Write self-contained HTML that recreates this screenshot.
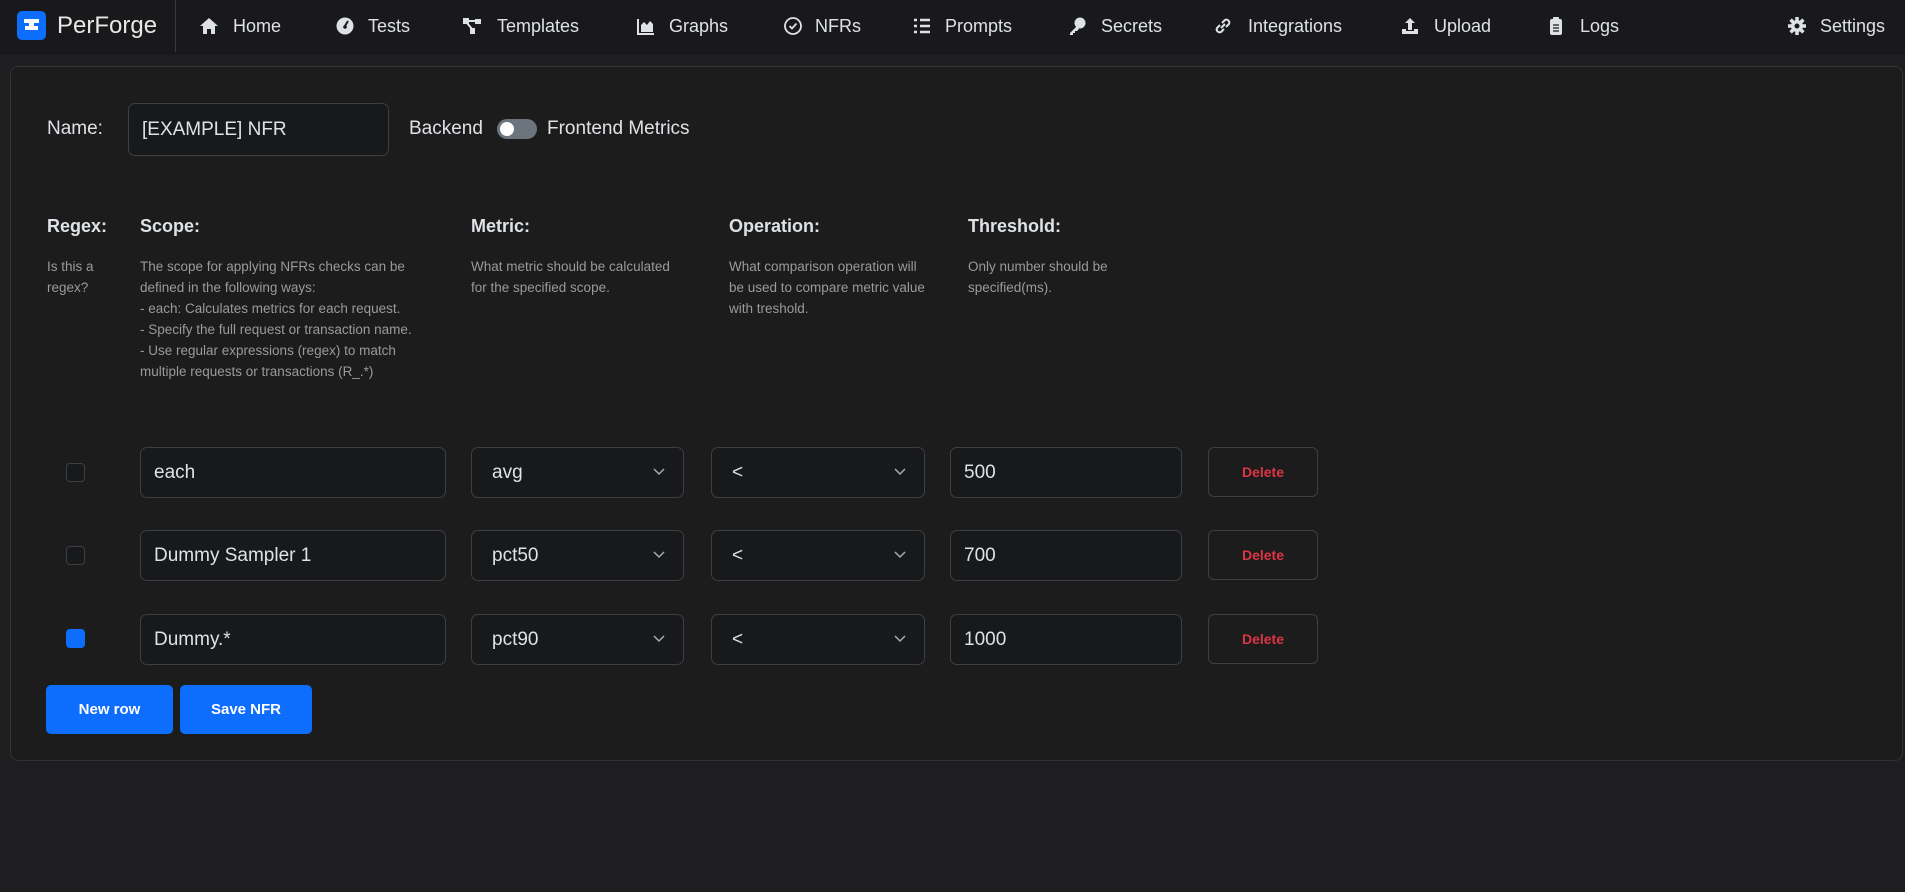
<!DOCTYPE html>
<html><head><meta charset="utf-8"><style>
*{box-sizing:border-box;margin:0;padding:0}
body{width:1905px;height:892px;background:#1e1e20;font-family:"Liberation Sans",sans-serif;color:#dee2e6;position:relative;overflow:hidden}
.a{position:absolute;white-space:nowrap}
.nav{position:absolute;left:0;top:0;width:1905px;height:55px;background:#19191b}
.ni{position:absolute;top:15px;font-size:18px;color:#dee2e6;line-height:22px}
.ic{position:absolute;top:16px;width:20px;height:20px}
.card{position:absolute;left:10px;top:66px;width:1893px;height:695px;background:#1c1c1c;border:1px solid #333;border-radius:8px}
.h{position:absolute;top:216px;font-size:18px;font-weight:bold;color:#dee2e6}
.d{position:absolute;top:256px;font-size:13.5px;line-height:21px;color:#9a9a9a}
.in{position:absolute;height:51px;background:#18191b;border:1px solid #3c3f44;border-radius:7px;font-size:19px;line-height:49px;padding-left:13px;color:#dee2e6}
.sel{padding-left:20px}
.sel svg{position:absolute;right:18px;top:20px}
.cb{position:absolute;left:66px;width:19px;height:19px;border:1px solid #3c3f44;border-radius:4px;background:#18191b}
.del{position:absolute;left:1208px;width:110px;height:50px;border:1px solid #3c3f44;border-radius:6px;color:#dc3545;font-weight:bold;font-size:14px;text-align:center;line-height:48px}
.btn{position:absolute;top:685px;height:49px;background:#0d6efd;border-radius:5px;color:#fff;font-weight:bold;font-size:15px;text-align:center;line-height:49px}
</style></head><body>
<div class="nav">
<div class="a" style="left:17px;top:11px;width:29px;height:29px;background:#0d6efd;border-radius:5px"></div>
<svg class="a" style="left:22px;top:17px" width="19" height="17" viewBox="0 0 19 17"><path d="M2 2h15v4h-5v3h4v4H3V9h4V6H2z" fill="#fff"/></svg>
<div class="a" style="left:57px;top:12px;font-size:24px;color:#e8e8e8">PerForge</div>
<div class="a" style="left:175px;top:0;width:1px;height:52px;background:#3a3a3a"></div>
<svg class="ic" style="left:199px" viewBox="0 0 20 20"><path d="M10 2L1 10h3v8h4v-5h4v5h4v-8h3z" fill="#dee2e6"/></svg><div class="ni" style="left:233px">Home</div>
<svg class="ic" style="left:335px" viewBox="0 0 20 20"><circle cx="10" cy="10" r="8.5" fill="#dee2e6"/><path d="M10 10l3-5" stroke="#19191b" stroke-width="2"/><circle cx="10" cy="11" r="1.8" fill="#19191b"/></svg><div class="ni" style="left:368px">Tests</div>
<svg class="ic" style="left:462px" viewBox="0 0 20 20"><rect x="1" y="2" width="6" height="6" fill="#dee2e6"/><rect x="13" y="3" width="6" height="5" fill="#dee2e6"/><rect x="8" y="12" width="5" height="6" fill="#dee2e6"/><path d="M6 5h8M5 7l5 6" stroke="#dee2e6" stroke-width="2"/></svg><div class="ni" style="left:497px">Templates</div>
<svg class="ic" style="left:636px" viewBox="0 0 20 20"><path d="M2 3v15h16" stroke="#dee2e6" stroke-width="2" fill="none"/><path d="M5 16V9l3-3 3 3 3-4 3 3v8z" fill="#dee2e6"/></svg><div class="ni" style="left:669px">Graphs</div>
<svg class="ic" style="left:783px" viewBox="0 0 20 20"><circle cx="10" cy="10" r="8" stroke="#dee2e6" stroke-width="1.8" fill="none"/><path d="M6.5 10l2.5 2.5 4.5-5" stroke="#dee2e6" stroke-width="1.8" fill="none"/></svg><div class="ni" style="left:815px">NFRs</div>
<svg class="ic" style="left:912px" viewBox="0 0 20 20"><path d="M2 4h3M2 10h3M2 16h3M8 4h10M8 10h10M8 16h10" stroke="#dee2e6" stroke-width="2.5"/></svg><div class="ni" style="left:945px">Prompts</div>
<svg class="ic" style="left:1067px" viewBox="0 0 20 20"><circle cx="13" cy="7" r="5.5" fill="#dee2e6"/><path d="M10 10L3 17v2h3v-2h2v-2h2l2-2" fill="#dee2e6"/></svg><div class="ni" style="left:1101px">Secrets</div>
<svg class="ic" style="left:1213px" viewBox="0 0 20 20"><path d="M8 12l4-4M7 9l-3 3a3 3 0 004 4l3-3M13 11l3-3a3 3 0 00-4-4l-3 3" stroke="#dee2e6" stroke-width="2" fill="none"/></svg><div class="ni" style="left:1248px">Integrations</div>
<svg class="ic" style="left:1400px" viewBox="0 0 20 20"><path d="M10 2l-5 5h3v7h4V7h3z" fill="#dee2e6"/><path d="M2 13v5h16v-5h-4v2H6v-2z" fill="#dee2e6"/></svg><div class="ni" style="left:1434px">Upload</div>
<svg class="ic" style="left:1546px" viewBox="0 0 20 20"><rect x="4" y="3" width="12" height="16" rx="2" fill="#dee2e6"/><rect x="7" y="1" width="6" height="4" rx="1" fill="#dee2e6"/><path d="M7 9h6M7 12h6M7 15h6" stroke="#19191b" stroke-width="1.3"/></svg><div class="ni" style="left:1580px">Logs</div>
<svg class="ic" style="left:1787px" viewBox="0 0 20 20"><circle cx="10" cy="10" r="6" fill="#dee2e6"/><path d="M10 1v18M1 10h18M3.6 3.6l12.8 12.8M16.4 3.6L3.6 16.4" stroke="#dee2e6" stroke-width="3.5"/><circle cx="10" cy="10" r="2.5" fill="#19191b"/></svg><div class="ni" style="left:1820px">Settings</div>
</div>
<div class="card"></div>
<div class="a" style="left:47px;top:118px;font-size:19px">Name:</div>
<div class="in" style="left:128px;top:103px;width:261px;height:53px;line-height:51px">[EXAMPLE] NFR</div>
<div class="a" style="left:409px;top:118px;font-size:19px">Backend</div>
<div class="a" style="left:497px;top:119px;width:40px;height:20px;background:#6c757d;border-radius:10px"></div>
<div class="a" style="left:500px;top:122px;width:14px;height:14px;background:#fff;border-radius:50%"></div>
<div class="a" style="left:547px;top:118px;font-size:19px">Frontend Metrics</div>

<div class="h" style="left:47px">Regex:</div>
<div class="h" style="left:140px">Scope:</div>
<div class="h" style="left:471px">Metric:</div>
<div class="h" style="left:729px">Operation:</div>
<div class="h" style="left:968px">Threshold:</div>
<div class="d" style="left:47px">Is this a<br>regex?</div>
<div class="d" style="left:140px">The scope for applying NFRs checks can be<br>defined in the following ways:<br>- each: Calculates metrics for each request.<br>- Specify the full request or transaction name.<br>- Use regular expressions (regex) to match<br>multiple requests or transactions (R_.*)</div>
<div class="d" style="left:471px">What metric should be calculated<br>for the specified scope.</div>
<div class="d" style="left:729px">What comparison operation will<br>be used to compare metric value<br>with treshold.</div>
<div class="d" style="left:968px">Only number should be<br>specified(ms).</div>

<div class="cb" style="top:463px"></div>
<div class="in" style="left:140px;top:447px;width:306px">each</div>
<div class="in sel" style="left:471px;top:447px;width:213px">avg<svg width="12" height="8"><path d="M1 1l5 5 5-5" stroke="#aaa" stroke-width="1.5" fill="none"/></svg></div>
<div class="in sel" style="left:711px;top:447px;width:214px">&lt;<svg width="12" height="8"><path d="M1 1l5 5 5-5" stroke="#aaa" stroke-width="1.5" fill="none"/></svg></div>
<div class="in" style="left:950px;top:447px;width:232px">500</div>
<div class="del" style="top:447px">Delete</div>

<div class="cb" style="top:546px"></div>
<div class="in" style="left:140px;top:530px;width:306px">Dummy Sampler 1</div>
<div class="in sel" style="left:471px;top:530px;width:213px">pct50<svg width="12" height="8"><path d="M1 1l5 5 5-5" stroke="#aaa" stroke-width="1.5" fill="none"/></svg></div>
<div class="in sel" style="left:711px;top:530px;width:214px">&lt;<svg width="12" height="8"><path d="M1 1l5 5 5-5" stroke="#aaa" stroke-width="1.5" fill="none"/></svg></div>
<div class="in" style="left:950px;top:530px;width:232px">700</div>
<div class="del" style="top:530px">Delete</div>

<div class="cb" style="top:629px;background:#0d6efd;border-color:#0d6efd"></div>
<div class="in" style="left:140px;top:614px;width:306px">Dummy.*</div>
<div class="in sel" style="left:471px;top:614px;width:213px">pct90<svg width="12" height="8"><path d="M1 1l5 5 5-5" stroke="#aaa" stroke-width="1.5" fill="none"/></svg></div>
<div class="in sel" style="left:711px;top:614px;width:214px">&lt;<svg width="12" height="8"><path d="M1 1l5 5 5-5" stroke="#aaa" stroke-width="1.5" fill="none"/></svg></div>
<div class="in" style="left:950px;top:614px;width:232px">1000</div>
<div class="del" style="top:614px">Delete</div>

<div class="btn" style="left:46px;width:127px">New row</div>
<div class="btn" style="left:180px;width:132px">Save NFR</div>
</body></html>
